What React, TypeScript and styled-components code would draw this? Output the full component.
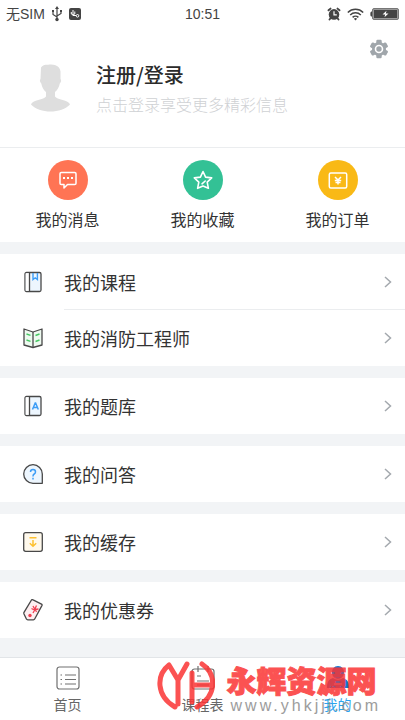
import React from "react";
import styled, { createGlobalStyle } from "styled-components";

const Global = createGlobalStyle`
  * { box-sizing: border-box; }
  body {
    margin: 0;
    background: #f2f4f6;
    color: #333;
    font-family: "Noto Sans CJK SC", sans-serif;
  }
  button { font: inherit; color: inherit; background: none; border: 0; padding: 0; cursor: pointer; }
  a { color: inherit; text-decoration: none; }
  svg { display: block; flex: none; }
`;

const Screen = styled.div`
  position: relative;
  min-height: 100vh;
  display: flex;
  flex-direction: column;
`;

const StatusBar = styled.header`
  display: grid;
  grid-template-columns: 1fr auto 1fr;
  align-items: center;
  height: 28px;
  padding: 0 6px;
  background: #fff;
  font: 14px/20px "Liberation Sans", "Noto Sans CJK SC", sans-serif;
  color: #444;
`;

const StatusGroup = styled.div<{ $end?: boolean }>`
  display: flex;
  align-items: center;
  gap: 6px;
  justify-content: ${(p) => (p.$end ? "flex-end" : "flex-start")};
`;

const Profile = styled.section`
  display: flex;
  align-items: flex-start;
  height: 120px;
  padding: 11px 16px 0 28px;
  background: #fff;
  border-bottom: 1px solid #ebedef;
`;

const Login = styled.button`
  display: flex;
  flex: 1;
  align-items: center;
  gap: 24px;
  margin-top: 21px;
  text-align: left;
`;

const LoginText = styled.span`
  display: flex;
  flex-direction: column;
  gap: 2px;
`;

const Title = styled.span`
  font-size: 20px;
  line-height: 30px;
  font-weight: 500;
  color: #2b2b2b;
`;

const Hint = styled.span`
  font-size: 16px;
  line-height: 24px;
  font-weight: 300;
  color: #cfd1d4;
  white-space: nowrap;
`;

const Quick = styled.nav`
  display: grid;
  grid-template-columns: repeat(3, 1fr);
  height: 94px;
  padding-top: 12px;
  background: #fff;
`;

const QuickItem = styled.button`
  display: flex;
  flex-direction: column;
  align-items: center;
  gap: 7px;
  font-size: 16px;
  line-height: 24px;
`;

const Disc = styled.span<{ $color: string }>`
  display: grid;
  place-items: center;
  width: 40px;
  height: 40px;
  border-radius: 50%;
  background: ${(p) => p.$color};
`;

const Menu = styled.main`
  flex: 1;
  display: flex;
  flex-direction: column;
  gap: 12px;
  padding: 12px 0 19px;
`;

const Group = styled.section`
  background: #fff;
`;

const Row = styled.button`
  display: flex;
  align-items: center;
  width: 100%;
  height: 56px;
  padding-left: 22px;
  gap: 20px;
`;

const RowBody = styled.span`
  flex: 1;
  display: flex;
  align-items: center;
  justify-content: space-between;
  height: 100%;
  padding-right: 12px;
  font-size: 18px;
  line-height: 28px;

  ${Row}:not(:last-child) > & { border-bottom: 1px solid #ebedef; }
`;

const TabBar = styled.nav`
  display: grid;
  grid-template-columns: repeat(3, 1fr);
  height: 63px;
  background: #fff;
  border-top: 1px solid #e2e5e8;
`;

const Tab = styled.a<{ $active?: boolean }>`
  display: flex;
  flex-direction: column;
  align-items: center;
  gap: 4px;
  padding-top: 8px;
  font-size: 14px;
  line-height: 20px;
  color: ${(p) => (p.$active ? "#2ba3ee" : "#666")};
`;

const Watermark = styled.div`
  position: absolute;
  right: 24px;
  bottom: 5px;
  display: flex;
  gap: 12px;
  color: #fb3434;
  opacity: 0.85;
  pointer-events: none;
`;

const MarkText = styled.div`
  display: flex;
  flex-direction: column;
`;

const MarkName = styled.strong`
  font-size: 30px;
  line-height: 36px;
  font-weight: 900;
  -webkit-text-stroke: 1px #fb3434;
`;

const MarkUrl = styled.span`
  padding-left: 4px;
  font: 16px/18px "Liberation Sans", sans-serif;
  letter-spacing: 3px;
  color: #8c8c8c;
`;

const UsbIcon = () => (
  <svg width="12" height="16" viewBox="0 0 12 16" fill="none" stroke="#444" strokeWidth="1.2">
    <path d="M6 2v11M2 5v3.500L6 11M10 5v2.500L6 10" />
    <path d="M6 0 4 3h4zM1 4h2v2H1zM9 4h2v2H9z" fill="#444" stroke="none" />
    <circle cx="6" cy="13.500" r="1.700" fill="#444" stroke="none" />
  </svg>
);

const DebugIcon = () => (
  <svg width="12" height="12" viewBox="0 0 12 12">
    <rect width="12" height="12" rx="2" fill="#444" />
    <path d="M4 2v5.500h3M2.300 4v2L4 7M5.800 3.500V6L4 7" stroke="#fff" fill="none" />
    <circle cx="8.500" cy="7.800" r="1.300" stroke="#fff" fill="none" />
  </svg>
);

const AlarmIcon = () => (
  <svg width="14" height="14" viewBox="0 0 14 14">
    <path d="m1.500 3.300 2-1.700M12.500 3.300l-2-1.700M3.300 11.500l-.8 1M10.700 11.500l.8 1" stroke="#444" strokeWidth="1.900" strokeLinecap="round" />
    <circle cx="7" cy="7.400" r="5.300" fill="#444" />
    <path d="M7 4.300v3.500h2.800" stroke="#fff" strokeWidth="1.200" fill="none" />
  </svg>
);

const WifiIcon = () => (
  <svg width="17" height="13" viewBox="0 0 17 13" fill="none" stroke="#444" strokeWidth="1.500">
    <path d="M.8 4.500a11 11 0 0 1 15.400 0M3.200 7a7.600 7.600 0 0 1 10.600 0M5.600 9.400a4.200 4.200 0 0 1 5.800 0" />
    <path d="m8.500 12.600-1.600-1.800a2.300 2.300 0 0 1 3.200 0z" fill="#444" stroke="none" />
  </svg>
);

const BatteryIcon = () => (
  <svg width="29" height="12" viewBox="0 0 29 12">
    <path d="M2 3.500H1.300Q.3 3.500.3 6t1 2.500H2z" fill="#444" />
    <rect x="2.500" y=".5" width="26" height="11" rx="1.500" fill="#999" stroke="#777" />
    <rect x="4" y="2" width="23" height="8" fill="#444" />
    <path d="m16.500 2.800-4 3.700h2.700l-.7 2.700 4-3.700h-2.700z" fill="#fff" />
  </svg>
);

const GearIcon = () => (
  <svg width="20" height="20" viewBox="0 0 20 20">
    <g fill="#a0a6ab">
      <circle cx="10" cy="10" r="7" />
      {[0, 60, 120].map((a) => (
        <rect key={a} x="7.300" y=".7" width="5.400" height="18.600" rx="1.200" transform={`rotate(${a} 10 10)`} />
      ))}
    </g>
    <circle cx="10" cy="10" r="3.500" fill="none" stroke="#fff" strokeWidth="1.600" />
  </svg>
);

const Avatar = () => (
  <svg width="44" height="50" viewBox="0 0 44 50" fill="#dedede">
    <path d="M13 4.500C16 .8 19 2 23 1.500c6 0 9 3 9.500 7v7.500c1 1 .8 3-.7 4.500-.8 4-2.500 6.500-4.800 8.500v4.500c1.500 3 14 3.500 15 8C38 46 30 48.500 22.500 48.500S7 46 3 41.500c1-4.500 13.500-5 15-8V29c-2.300-2-4-4.500-4.700-8.500-1.500-1.500-1.800-3.500-.8-4.500z" />
  </svg>
);

const MessageIcon = () => (
  <svg width="20" height="20" viewBox="0 0 20 20" fill="none" stroke="#fff" strokeWidth="1.500" strokeLinejoin="round">
    <path d="M3.300 2.500h13.400q1.300 0 1.300 1.300v9.400q0 1.300-1.300 1.300H9.500L6 18v-3.500H3.300Q2 14.500 2 13.200V3.800q0-1.300 1.300-1.300z" />
    <path d="M5 8h2M9 8h2M13 8h2" strokeWidth="2" />
  </svg>
);

const StarIcon = () => (
  <svg width="20" height="20" viewBox="0 0 20 20" fill="none" stroke="#fff" strokeWidth="1.600" strokeLinejoin="round">
    <path d="m10 1.500 2.600 5.600 6.100.8-4.500 4.200 1.200 6.200-5.400-2.200-5.400 2.200 1.200-6.200L1.300 7.900l6.100-.8z" />
    <path d="m9 13.800 3.200-2.800" strokeLinecap="round" />
  </svg>
);

const OrderIcon = () => (
  <svg width="20" height="20" viewBox="0 0 20 20" fill="none" stroke="#fff" strokeWidth="1.500">
    <rect x="1.300" y="3" width="17.400" height="15" rx="1.500" />
    <path d="m7 7 3 3 3-3M10 10v4.500M6.800 10.500h6.400M7.500 12.400h5" />
  </svg>
);

const BookIcon = ({ letter }: { letter?: boolean }) => (
  <svg width="22" height="22" viewBox="0 0 22 22" fill="none">
    <rect x="3" y="1.500" width="16" height="19" rx="1.500" fill="#edf6fe" stroke="#484848" strokeWidth="1.300" />
    <path d="M3.700 2.200H7v17.600H3.700z" fill="#fff" />
    <path d="M7.500 1.500v19" stroke="#484848" strokeWidth="1.300" />
    {letter ? (
      <path d="m10.500 14.500 2.700-6.500h.4l2.700 6.500M11.500 12.500h3.800" stroke="#3d9df6" strokeWidth="1.500" />
    ) : (
      <path d="M11 2v6.500l2.200-1.700 2.200 1.700V2" stroke="#3d9df6" strokeWidth="1.400" />
    )}
  </svg>
);

const OpenBookIcon = () => (
  <svg width="22" height="22" viewBox="0 0 22 22" fill="none">
    <path d="m2 2 9 3 9-3v16l-9 2.500L2 18z" fill="#eefaf0" stroke="#484848" strokeWidth="1.300" strokeLinejoin="round" />
    <path d="M11 5v15.500" stroke="#484848" strokeWidth="1.300" />
    <path d="m4.500 7 4 1.300M4.500 13l4 1.300M13.500 8.500l4-1.500M13.500 14.500l4-1.500" stroke="#45c862" strokeWidth="1.400" />
  </svg>
);

const QuestionIcon = () => (
  <svg width="22" height="22" viewBox="0 0 22 22" fill="none">
    <path d="M11 1.700a9.300 9.300 0 1 0 0 18.600h9.300V11A9.300 9.300 0 0 0 11 1.700z" fill="#edf6fe" stroke="#484848" strokeWidth="1.300" strokeLinejoin="round" />
    <path d="M8.500 9q0-2.500 2.500-2.500T13.500 9q0 1.200-1.300 2T11 13.500M11 14.800v1.700" stroke="#3d9df6" strokeWidth="1.500" />
  </svg>
);

const CacheIcon = () => (
  <svg width="22" height="22" viewBox="0 0 22 22" fill="none">
    <rect x="1.700" y="1.700" width="18.600" height="18.600" rx="2" fill="#fff9ec" stroke="#484848" strokeWidth="1.300" />
    <path d="M7.500 6.800h7M11 9v6.500M7.800 12.300l3.200 3 3.200-3" stroke="#fdc02f" strokeWidth="1.500" />
  </svg>
);

const CouponIcon = () => (
  <svg width="22" height="22" viewBox="0 0 22 22" fill="none">
    <path d="M9.500.9q.8-.5 1.600 0l8.400 4.200q.9.500.4 1.500L12.700 20q-.4.800-1.300.8H5.800q-1 0-1.400-.8L2 15q-.4-1 0-1.700z" fill="#fdeef0" stroke="#484848" strokeWidth="1.300" />
    <path d="m11 7 2 3.500 3.500-.5M13 10.500 11 14M9.500 9.500l5.500 3M14.500 6.500 12 12" stroke="#f03e50" strokeWidth="1.300" />
    <circle cx="8" cy="16.500" r="1.700" fill="#f03e50" />
  </svg>
);

const Chevron = () => (
  <svg width="10" height="14" viewBox="0 0 10 14" fill="none" stroke="#a4a9ae" strokeWidth="1.500">
    <path d="m2 2 5.500 5L2 12" />
  </svg>
);

const HomeIcon = () => (
  <svg width="24" height="24" viewBox="0 0 24 24" fill="none" stroke="#707070" strokeWidth="1.200">
    <rect x="1" y="1" width="22" height="22" rx="2.500" />
    <path d="M9 9h11M9 13.500h11M9 18h11M4.500 9H6M4.500 13.500H6M4.500 18H6" />
  </svg>
);

const ScheduleIcon = () => (
  <svg width="24" height="24" viewBox="0 0 24 24" fill="none" stroke="#707070" strokeWidth="1.200">
    <rect x="1" y="3" width="22" height="20" rx="2.500" />
    <path d="M7 0v6M17 0v6M6 10h4M6 15h12M6 19h12" />
  </svg>
);

const PersonIcon = () => (
  <svg width="24" height="24" viewBox="0 0 24 24">
    <path d="M12 0c4 0 6 3 6 6.500S15.500 13 12 13 6 10 6 6.500 8 0 12 0zM7 12q5 3.500 10 0c4 1 6 4 6 9v1H1v-1c0-5 2-8 6-9z" fill="#1479d0" />
    <path d="M8 18h8" stroke="#fff" />
  </svg>
);

const MarkLogo = () => (
  <svg width="58" height="50" viewBox="0 0 58 50" fill="none" stroke="#fb3434" strokeWidth="5" strokeLinecap="round" strokeLinejoin="round">
    <path d="M18 46C-1 35-1 14 12 4l9 15v24M30 3l-9 16M35 12v29M35 24h20M40 46c20-11 20-33 5-43" />
  </svg>
);

const groups = [
  [
    { label: "我的课程", icon: <BookIcon /> },
    { label: "我的消防工程师", icon: <OpenBookIcon /> },
  ],
  [{ label: "我的题库", icon: <BookIcon letter /> }],
  [{ label: "我的问答", icon: <QuestionIcon /> }],
  [{ label: "我的缓存", icon: <CacheIcon /> }],
  [{ label: "我的优惠券", icon: <CouponIcon /> }],
];

const shortcuts = [
  { label: "我的消息", color: "#ff7454", icon: <MessageIcon /> },
  { label: "我的收藏", color: "#33c195", icon: <StarIcon /> },
  { label: "我的订单", color: "#f9b916", icon: <OrderIcon /> },
];

export default function App() {
  return (
    <Screen>
      <Global />
      <StatusBar>
        <StatusGroup>
          <span>无SIM</span>
          <UsbIcon />
          <DebugIcon />
        </StatusGroup>
        <time>10:51</time>
        <StatusGroup $end>
          <AlarmIcon />
          <WifiIcon />
          <BatteryIcon />
        </StatusGroup>
      </StatusBar>
      <Profile>
        <Login>
          <Avatar />
          <LoginText>
            <Title>注册/登录</Title>
            <Hint>点击登录享受更多精彩信息</Hint>
          </LoginText>
        </Login>
        <button aria-label="设置">
          <GearIcon />
        </button>
      </Profile>
      <Quick>
        {shortcuts.map((s) => (
          <QuickItem key={s.label}>
            <Disc $color={s.color}>{s.icon}</Disc>
            {s.label}
          </QuickItem>
        ))}
      </Quick>
      <Menu>
        {groups.map((rows) => (
          <Group key={rows[0].label}>
            {rows.map((r) => (
              <Row key={r.label}>
                {r.icon}
                <RowBody>
                  {r.label}
                  <Chevron />
                </RowBody>
              </Row>
            ))}
          </Group>
        ))}
      </Menu>
      <TabBar>
        <Tab href="#home">
          <HomeIcon />
          首页
        </Tab>
        <Tab href="#schedule">
          <ScheduleIcon />
          课程表
        </Tab>
        <Tab href="#me" $active aria-current="page">
          <PersonIcon />
          我的
        </Tab>
      </TabBar>
      <Watermark>
        <MarkLogo />
        <MarkText>
          <MarkName>永辉资源网</MarkName>
          <MarkUrl>www.yhkjjj.com</MarkUrl>
        </MarkText>
      </Watermark>
    </Screen>
  );
}
